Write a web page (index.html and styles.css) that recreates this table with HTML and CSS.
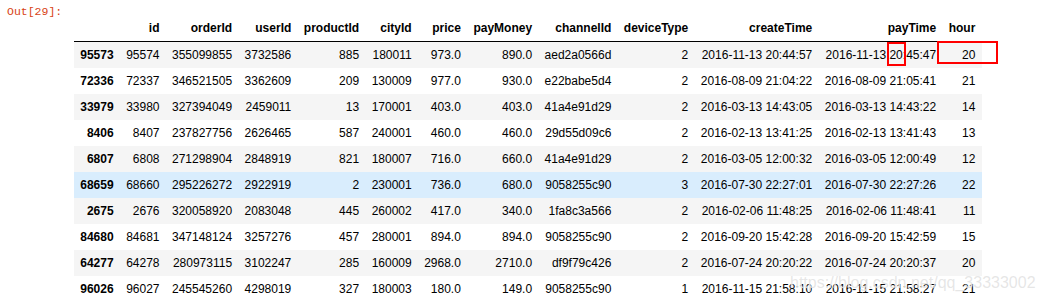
FILE: index.html
```html
<!DOCTYPE html>
<html lang="en">
<head>
    <meta charset="UTF-8">
    <title>Out[29]</title>
    <link rel="stylesheet" href="styles.css">
</head>
<body>
    <div class="output">
        <div class="prompt">Out[29]:</div>
        <div class="result">
            <table class="dataframe">
                <thead>
                    <tr>
                        <th></th>
                        <th>id</th>
                        <th>orderId</th>
                        <th>userId</th>
                        <th>productId</th>
                        <th>cityId</th>
                        <th>price</th>
                        <th>payMoney</th>
                        <th>channelId</th>
                        <th>deviceType</th>
                        <th>createTime</th>
                        <th>payTime</th>
                        <th>hour</th>
                    </tr>
                </thead>
                <tbody>
                    <tr>
                        <th>95573</th><td>95574</td><td>355099855</td><td>3732586</td><td>885</td><td>180011</td><td>973.0</td><td>890.0</td><td>aed2a0566d</td><td>2</td><td>2016-11-13 20:44:57</td><td>2016-11-13 <span class="mark">20</span>:45:47</td><td class="mark-cell">20</td>
                    </tr>
                    <tr>
                        <th>72336</th><td>72337</td><td>346521505</td><td>3362609</td><td>209</td><td>130009</td><td>977.0</td><td>930.0</td><td>e22babe5d4</td><td>2</td><td>2016-08-09 21:04:22</td><td>2016-08-09 21:05:41</td><td>21</td>
                    </tr>
                    <tr>
                        <th>33979</th><td>33980</td><td>327394049</td><td>2459011</td><td>13</td><td>170001</td><td>403.0</td><td>403.0</td><td>41a4e91d29</td><td>2</td><td>2016-03-13 14:43:05</td><td>2016-03-13 14:43:22</td><td>14</td>
                    </tr>
                    <tr>
                        <th>8406</th><td>8407</td><td>237827756</td><td>2626465</td><td>587</td><td>240001</td><td>460.0</td><td>460.0</td><td>29d55d09c6</td><td>2</td><td>2016-02-13 13:41:25</td><td>2016-02-13 13:41:43</td><td>13</td>
                    </tr>
                    <tr>
                        <th>6807</th><td>6808</td><td>271298904</td><td>2848919</td><td>821</td><td>180007</td><td>716.0</td><td>660.0</td><td>41a4e91d29</td><td>2</td><td>2016-03-05 12:00:32</td><td>2016-03-05 12:00:49</td><td>12</td>
                    </tr>
                    <tr class="hover">
                        <th>68659</th><td>68660</td><td>295226272</td><td>2922919</td><td>2</td><td>230001</td><td>736.0</td><td>680.0</td><td>9058255c90</td><td>3</td><td>2016-07-30 22:27:01</td><td>2016-07-30 22:27:26</td><td>22</td>
                    </tr>
                    <tr>
                        <th>2675</th><td>2676</td><td>320058920</td><td>2083048</td><td>445</td><td>260002</td><td>417.0</td><td>340.0</td><td>1fa8c3a566</td><td>2</td><td>2016-02-06 11:48:25</td><td>2016-02-06 11:48:41</td><td>11</td>
                    </tr>
                    <tr>
                        <th>84680</th><td>84681</td><td>347148124</td><td>3257276</td><td>457</td><td>280001</td><td>894.0</td><td>894.0</td><td>9058255c90</td><td>2</td><td>2016-09-20 15:42:28</td><td>2016-09-20 15:42:59</td><td>15</td>
                    </tr>
                    <tr>
                        <th>64277</th><td>64278</td><td>280973115</td><td>3102247</td><td>285</td><td>160009</td><td>2968.0</td><td>2710.0</td><td>df9f79c426</td><td>2</td><td>2016-07-24 20:20:22</td><td>2016-07-24 20:20:37</td><td>20</td>
                    </tr>
                    <tr>
                        <th>96026</th><td>96027</td><td>245545260</td><td>4298019</td><td>327</td><td>180003</td><td>180.0</td><td>149.0</td><td>9058255c90</td><td>1</td><td>2016-11-15 21:58:10</td><td>2016-11-15 21:58:27</td><td>21</td>
                    </tr>
                </tbody>
            </table>
        </div>
    </div>
    <div class="watermark">https://blog.csdn.net/qq_33333002</div>
</body>
</html>
```

FILE: styles.css
```css
body {
    margin: 0;
    background-color: #fff;
    color: #000;
    font-family: 'Liberation Sans', Arial, sans-serif;
    overflow: hidden;
}

.output {
    display: flex;
    padding-top: 4px;
}

.prompt {
    width: 74px;
    padding-left: 7px;
    box-sizing: border-box;
    font-family: 'Liberation Mono', monospace;
    font-size: 11.5px;
    line-height: 16px;
    color: #d84315;
}

.result {
    padding-top: 11px;
}

.dataframe {
    border-collapse: collapse;
    border-spacing: 0;
    font-size: 12px;
}

.dataframe th,
.dataframe td {
    text-align: right;
    vertical-align: middle;
    padding: 6px 6.25px;
    line-height: 14px;
    white-space: nowrap;
}

.dataframe thead {
    border-bottom: 1px solid #000;
}

.dataframe tbody tr:nth-child(odd) {
    background-color: #f5f5f5;
}

.dataframe tbody tr.hover {
    background-color: rgba(66, 165, 245, 0.2);
}

/* red highlight boxes drawn over the cells */
.mark {
    position: relative;
}

.mark::after {
    content: "";
    position: absolute;
    left: -2px;
    right: -3px;
    top: -6px;
    bottom: -4px;
    border: 2px solid #ff0000;
}

.mark-cell {
    position: relative;
}

.mark-cell::after {
    content: "";
    position: absolute;
    left: -5px;
    right: -16px;
    top: -1px;
    bottom: 4px;
    border: 2px solid #ff0000;
}

.watermark {
    position: absolute;
    left: 790px;
    top: 274px;
    font-size: 16px;
    color: rgba(200, 200, 200, 0.45);
    text-shadow: 0 0 1px #fff;
    white-space: nowrap;
}
```
